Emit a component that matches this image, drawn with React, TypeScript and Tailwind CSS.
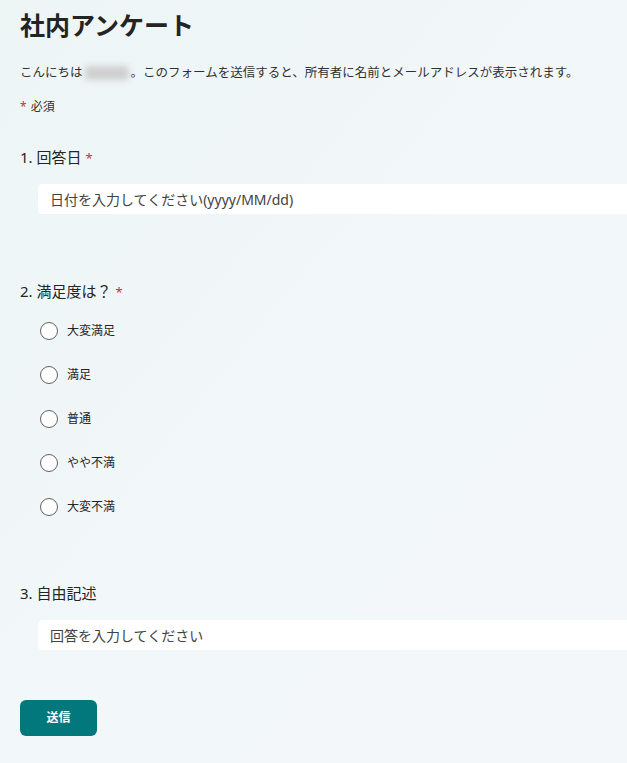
const options = ['大変満足', '満足', '普通', 'やや不満', '大変不満']

const font = { fontFamily: '"Noto Sans", "Noto Sans CJK JP", sans-serif' }

function Required() {
  return <span className="ml-1 text-[13px] text-[#c4314b]">*</span>
}

export default function App() {
  return (
    <div
      className="min-h-screen w-full overflow-hidden bg-gradient-to-br from-[#edf5f5] via-[#f2f7f9] to-[#f3f7fa] text-[#242424]"
      style={font}
    >
      <div className="px-5 pt-[9px] pb-6">
        {/* タイトル */}
        <h1 className="text-[25px] leading-[32px] font-bold text-[#242424]">社内アンケート</h1>

        <p className="mt-[22px] text-[12.5px] leading-[20px] text-[#323130] whitespace-nowrap flex items-center">
          こんにちは
          <span className="inline-block w-[44px] h-[14px] mx-[2px] rounded bg-[#cfcfcf] blur-[3px]" />
          。このフォームを送信すると、所有者に名前とメールアドレスが表示されます。
        </p>

        <p className="mt-[14px] text-[12px] leading-[20px] text-[#323130]">
          <span className="text-[#c4314b] mr-1">*</span>必須
        </p>

        {/* 1. 回答日 */}
        <div className="mt-[29px]">
          <div className="text-[15px] leading-[22px]">
            1. 回答日<Required />
          </div>
          <div className="mt-[15px] ml-[18px] w-[620px] h-[30px] bg-white rounded-sm flex items-center px-3 text-[14px] text-[#424242] whitespace-nowrap">
            日付を入力してください(yyyy/MM/dd)
          </div>
        </div>

        {/* 2. 満足度 */}
        <div className="mt-[66px]">
          <div className="text-[15px] leading-[22px]">
            2. 満足度は？<Required />
          </div>
          <div className="mt-[6px] ml-[20px] flex flex-col">
            {options.map((o) => (
              <label key={o} className="h-[44px] flex items-center gap-[9px] text-[12px] text-[#242424]">
                <span className="w-[18px] h-[18px] rounded-full border border-[#616161] bg-white" />
                {o}
              </label>
            ))}
          </div>
        </div>

        {/* 3. 自由記述 */}
        <div className="mt-[53px]">
          <div className="text-[15px] leading-[22px]">3. 自由記述</div>
          <div className="mt-4 ml-[18px] w-[620px] h-[30px] bg-white rounded-sm flex items-center px-3 text-[14px] text-[#424242] whitespace-nowrap">
            回答を入力してください
          </div>
        </div>

        <button className="mt-[50px] w-[77px] h-[36px] rounded-md bg-[#03787c] text-white text-[12px] font-bold">
          送信
        </button>
      </div>
    </div>
  )
}
